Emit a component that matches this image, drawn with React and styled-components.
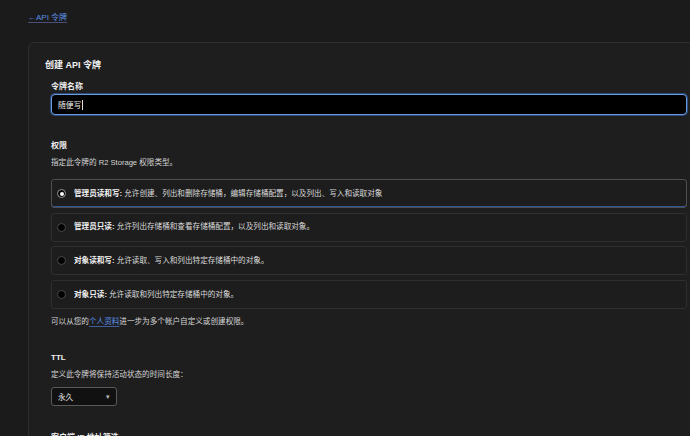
import React from 'react';
import styled, { createGlobalStyle } from 'styled-components';

const GlobalStyle = createGlobalStyle`
    html, body {
        margin: 0;
        padding: 0;
        background: #1b1b1b;
        overflow: hidden;
    }
    body {
        font-family: "Liberation Sans", "Noto Sans CJK SC", sans-serif;
        color: #d8d8d8;
        -webkit-font-smoothing: antialiased;
    }
`;

const options = [
    {
        title: '管理员读和写',
        desc: '允许创建、列出和删除存储桶，编辑存储桶配置，以及列出、写入和读取对象',
    },
    {
        title: '管理员只读',
        desc: '允许列出存储桶和查看存储桶配置，以及列出和读取对象。',
    },
    {
        title: '对象读和写',
        desc: '允许读取、写入和列出特定存储桶中的对象。',
    },
    {
        title: '对象只读',
        desc: '允许读取和列出特定存储桶中的对象。',
    },
];

const App = () => {
    const [selected, setSelected] = React.useState(0);
    return (
        <>
            <GlobalStyle />
            <Page>
                <BackLink href="#">←API 令牌</BackLink>
                <Card>
                    <Title>创建 API 令牌</Title>
                    <Form>
                        <FieldLabel>令牌名称</FieldLabel>
                        <TextField>
                            随便写<Caret />
                        </TextField>

                        <SectionHeading $top={26}>权限</SectionHeading>
                        <Hint>指定此令牌的 R2 Storage 权限类型。</Hint>
                        <OptionList>
                            {options.map((opt, i) => (
                                <Option
                                    key={opt.title}
                                    $active={selected === i}
                                    onClick={() => setSelected(i)}
                                >
                                    <Radio $active={selected === i} />
                                    <OptionText>
                                        <strong>{opt.title}:</strong> {opt.desc}
                                    </OptionText>
                                </Option>
                            ))}
                        </OptionList>
                        <Footnote>
                            可以从您的<InlineLink href="#">个人资料</InlineLink>
                            进一步为多个帐户自定义或创建权限。
                        </Footnote>

                        <SectionHeading $top={26}>TTL</SectionHeading>
                        <Hint>定义此令牌将保持活动状态的时间长度：</Hint>
                        <Select>
                            <span>永久</span>
                            <Arrow>▾</Arrow>
                        </Select>

                        <SectionHeading $top={27}>客户端 IP 地址筛选</SectionHeading>
                    </Form>
                </Card>
            </Page>
        </>
    );
};

const Page = styled.div`
    display: flex;
    flex-direction: column;
    align-items: flex-start;
    padding: 12px 0 0 28px;
`;

const BackLink = styled.a`
    font-size: 8px;
    line-height: 12px;
    color: #5b8fe3;
    text-decoration: underline;
    text-decoration-color: #4a4f7a;
    text-underline-offset: 2px;
`;

const Card = styled.div`
    align-self: stretch;
    margin: 18px -20px 0 0;
    padding: 16px 22px 0 16px;
    background: #1e1e1e;
    border: 1px solid #2e2e2e;
    border-radius: 6px;
    display: flex;
    flex-direction: column;
    height: 420px;
`;

const Title = styled.h1`
    margin: 0;
    font-size: 9px;
    line-height: 12px;
    font-weight: 600;
    color: #f2f2f2;
`;

const Form = styled.div`
    display: flex;
    flex-direction: column;
    padding-left: 6px;
`;

const FieldLabel = styled.label`
    margin-top: 11px;
    font-size: 8px;
    line-height: 10px;
    font-weight: 700;
    color: #ededed;
`;

const TextField = styled.div`
    margin-top: 2px;
    height: 21px;
    box-sizing: border-box;
    display: flex;
    align-items: center;
    padding: 0 6px;
    background: #000;
    border: 1px solid #6a9be0;
    box-shadow: 0 0 0 1px #2c4a78;
    border-radius: 4px;
    font-size: 7.8px;
    color: #f0f0f0;
`;

const Caret = styled.span`
    display: inline-block;
    width: 1px;
    height: 10px;
    margin-left: 1px;
    background: #e0e0e0;
`;

const SectionHeading = styled.h2`
    margin: ${(p) => p.$top}px 0 0;
    font-size: 8px;
    line-height: 10px;
    font-weight: 700;
    color: #f0f0f0;
`;

const Hint = styled.p`
    margin: 7px 0 0;
    font-size: 7.6px;
    line-height: 10px;
    color: #d6d6d6;
`;

const OptionList = styled.div`
    margin-top: 11px;
    display: flex;
    flex-direction: column;
    gap: 4.7px;
`;

const Option = styled.div`
    height: 29px;
    box-sizing: border-box;
    display: flex;
    align-items: center;
    gap: 8px;
    padding: 0 7px 0 5px;
    background: #1d1d1d;
    border: 1px solid ${(p) => (p.$active ? '#4f4f4f' : '#2f2f2f')};
    border-radius: 3px;
    box-shadow: ${(p) => (p.$active ? 'inset 0 -1px 0 #2d5591' : 'none')};
    cursor: pointer;
`;

const Radio = styled.span`
    position: relative;
    flex: none;
    width: 9px;
    height: 9px;
    box-sizing: border-box;
    border-radius: 50%;
    background: #000;
    border: 1px solid ${(p) => (p.$active ? '#9a9a9a' : '#4a4a4a')};
    &::after {
        content: '';
        display: ${(p) => (p.$active ? 'block' : 'none')};
        position: absolute;
        left: 1.5px;
        top: 1.5px;
        width: 4px;
        height: 4px;
        border-radius: 50%;
        background: #fff;
    }
`;

const OptionText = styled.span`
    font-size: 7.6px;
    line-height: 10px;
    color: #dadada;
    white-space: nowrap;
    strong {
        font-weight: 700;
        color: #f2f2f2;
    }
`;

const Footnote = styled.p`
    margin: 8px 0 0;
    font-size: 7.6px;
    line-height: 10px;
    color: #d6d6d6;
`;

const InlineLink = styled.a`
    color: #5b8fe3;
    text-decoration: underline;
    text-decoration-color: #3e5f9a;
    text-underline-offset: 2px;
`;

const Select = styled.div`
    margin-top: 7px;
    width: 66px;
    height: 19px;
    box-sizing: border-box;
    display: flex;
    align-items: center;
    justify-content: space-between;
    padding: 0 6px;
    background: #111;
    border: 1px solid #5a5a5a;
    border-radius: 3px;
    font-size: 7.6px;
    color: #e6e6e6;
`;

const Arrow = styled.span`
    font-size: 7px;
    color: #bdbdbd;
`;

export default App;
